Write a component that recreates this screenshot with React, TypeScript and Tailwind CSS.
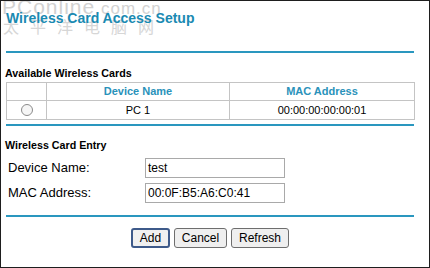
import React from 'react'

const COLS = ['', 'Device Name', 'MAC Address']

function Rule() {
  return <div className="mr-[15px] ml-[5px] h-[2px] bg-[#2a97bf]" />
}

export default function App() {
  return (
    <div className="w-[430px] h-[268px] overflow-hidden bg-white border border-[#1e1e1e] font-['Liberation_Sans',Arial,sans-serif] text-[11px] text-black">
      <div className="relative h-[50px]">
        {/* watermark behind the title */}
        <div className="absolute left-[1px] top-[-5px] text-[21px] leading-none text-[#d2d2d2] tracking-[1px]">
          PConline<span className="text-[17px]">.com.cn</span>
        </div>
        <div className="absolute left-[2px] top-[17px] text-[16px] leading-none text-[#d6d6d6] tracking-[11px] font-['Noto_Sans_CJK_SC',sans-serif]">
          太平洋电脑网
        </div>
        <h1 className="relative pl-[5px] pt-[9px] text-[14px] font-bold leading-[16px] text-[#1a8ab2]">
          Wireless Card Access Setup
        </h1>
      </div>

      <Rule />

      <div className="pl-[4px] pt-[14px] text-[10.7px] font-bold leading-[13px]">Available Wireless Cards</div>

      <table className="ml-[5px] mt-[2px] w-[409px] border-collapse">
        <thead>
          <tr className="h-[18px]">
            {COLS.map((c, i) => (
              <th
                key={i}
                className={`border border-[#c4c4c4] p-0 text-center font-bold text-[#2a92ba] ${
                  i === 0 ? 'w-[40px]' : i === 1 ? 'w-[183px]' : ''
                }`}
              >
                {c}
              </th>
            ))}
          </tr>
        </thead>
        <tbody>
          <tr className="h-[19px]">
            <td className="border border-[#c4c4c4] p-0">
              <div className="mx-auto h-[12px] w-[12px] rounded-full border border-[#8a8a8a] bg-[#f6f6f6]" />
            </td>
            <td className="border border-[#c4c4c4] p-0 text-center">PC 1</td>
            <td className="border border-[#c4c4c4] p-0 text-center">00:00:00:00:00:01</td>
          </tr>
        </tbody>
      </table>

      <div className="mt-[4px]">
        <Rule />
      </div>

      <div className="pl-[4px] pt-[13px] text-[10.7px] font-bold leading-[13px]">Wireless Card Entry</div>

      <div className="mt-[6px] flex flex-col gap-[5px] pl-[7px]">
        <div className="flex items-center">
          <span className="w-[137px] text-[13px]">Device Name:</span>
          <div className="flex h-[20px] w-[140px] items-center border border-[#a9a9a9] px-[2px] text-[12px]">test</div>
        </div>
        <div className="flex items-center">
          <span className="w-[137px] text-[13px]">MAC Address:</span>
          <div className="flex h-[20px] w-[140px] items-center border border-[#a9a9a9] px-[2px] text-[12px]">
            00:0F:B5:A6:C0:41
          </div>
        </div>
      </div>

      <div className="mt-[12px]">
        <Rule />
      </div>

      <div className="mt-[11px] flex gap-[4px] pl-[130px]">
        <button className="h-[20px] w-[39px] rounded-[3px] border-2 border-[#3e5a8a] bg-[#f0f0f0] text-[12px] leading-none">Add</button>
        <button className="h-[20px] w-[53px] rounded-[3px] border border-[#6e6e6e] bg-[#efefef] text-[12px] leading-none">Cancel</button>
        <button className="h-[20px] w-[58px] rounded-[3px] border border-[#6e6e6e] bg-[#efefef] text-[12px] leading-none">Refresh</button>
      </div>
    </div>
  )
}
